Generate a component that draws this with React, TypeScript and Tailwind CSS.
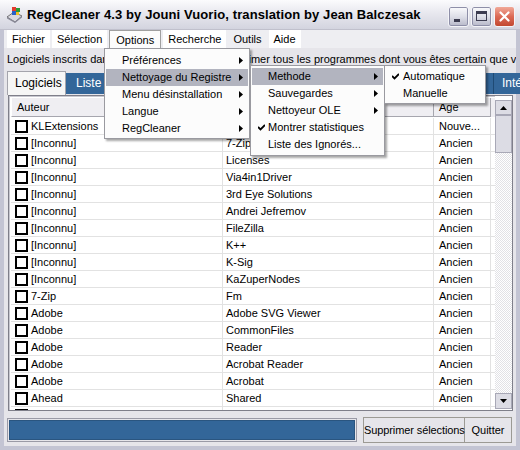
import React from "react";

const rows: [string, string, string][] = [
  ["KLExtensions", "", "Nouve..."],
  ["[Inconnu]", "7-Zip", "Ancien"],
  ["[Inconnu]", "Licenses", "Ancien"],
  ["[Inconnu]", "Via4in1Driver", "Ancien"],
  ["[Inconnu]", "3rd Eye Solutions", "Ancien"],
  ["[Inconnu]", "Andrei Jefremov", "Ancien"],
  ["[Inconnu]", "FileZilla", "Ancien"],
  ["[Inconnu]", "K++", "Ancien"],
  ["[Inconnu]", "K-Sig", "Ancien"],
  ["[Inconnu]", "KaZuperNodes", "Ancien"],
  ["7-Zip", "Fm", "Ancien"],
  ["Adobe", "Adobe SVG Viewer", "Ancien"],
  ["Adobe", "CommonFiles", "Ancien"],
  ["Adobe", "Reader", "Ancien"],
  ["Adobe", "Acrobat Reader", "Ancien"],
  ["Adobe", "Acrobat", "Ancien"],
  ["Ahead", "Shared", "Ancien"],
  ["Ahead", "Cover Designer", "Ancien"],
];

const Arrow = () => (
  <svg width="4" height="7" viewBox="0 0 4 7" className="absolute right-[5px] top-[5px]">
    <path d="M0 0 L4 3.5 L0 7 Z" fill="#000" />
  </svg>
);

const Check = ({ x }: { x: number }) => (
  <svg width="7" height="7" viewBox="0 0 7 7" className="absolute top-[5px]" style={{ left: x }}>
    <path d="M0 3 L2.5 5.5 L7 1" stroke="#000" strokeWidth="1.8" fill="none" />
  </svg>
);

function MenuItem({
  label,
  hl,
  arrow,
  check,
  pl,
}: {
  label: string;
  hl?: boolean;
  arrow?: boolean;
  check?: boolean;
  pl: string;
}) {
  return (
    <div className={`relative h-[17px] leading-[17px] mx-[1px] whitespace-nowrap ${pl} ${hl ? "bg-[#b2b4bf]" : ""}`}>
      {check && <Check x={6} />}
      {label}
      {arrow && <Arrow />}
    </div>
  );
}

function WinBtn({ kind }: { kind: "min" | "max" | "close" }) {
  const close = kind === "close";
  return (
    <div
      className={`w-[21px] h-[21px] rounded-[3px] border flex items-center justify-center ${
        close
          ? "border-[#f4f4f8] bg-gradient-to-b from-[#f0a898] via-[#dc6a56] to-[#c24830]"
          : "border-[#f4f4f8] bg-gradient-to-b from-[#fbfbfd] via-[#dedfe8] to-[#b7b8c9] shadow-[inset_0_0_0_1px_#8e8fa8]"
      }`}
    >
      {kind === "min" && <div className="w-[6px] h-[3px] bg-[#3c3c50] mt-[9px] -ml-[4px]" />}
      {kind === "max" && (
        <div className="w-[11px] h-[10px] border border-[#3c3c50] border-t-[3px]" />
      )}
      {close && (
        <svg width="11" height="11" viewBox="0 0 11 11">
          <path d="M1.5 1.5 L9.5 9.5 M9.5 1.5 L1.5 9.5" stroke="#fff" strokeWidth="2.2" strokeLinecap="round" />
        </svg>
      )}
    </div>
  );
}

export default function App() {
  const font = { fontFamily: '"Liberation Sans", Arial, sans-serif' };
  return (
    <div
      className="relative w-[520px] h-[450px] overflow-hidden bg-[#c3c4d3] text-[11px] text-black"
      style={font}
    >
      {/* Title bar */}
      <div className="h-[30px] flex items-center bg-gradient-to-b from-[#fbfbfd] via-[#e6e6ed] to-[#d3d4df] border-b border-[#c0c0cc] pl-[6px] pr-[5px]">
        <svg width="17" height="17" viewBox="0 0 17 17" className="mr-[4px]">
          <path d="M1 11 L9 16 L16 10 L8 6 Z" fill="#d8d8e0" stroke="#555" strokeWidth="0.8" />
          <path d="M1 11 L1 12.5 L9 17 L16 11.5 L16 10 L9 15.5 Z" fill="#8a8a98" />
          <rect x="6" y="1" width="4" height="4" fill="#e23b2e" />
          <rect x="10" y="2" width="4" height="4" fill="#2a9a3a" />
          <rect x="6" y="5" width="4" height="4" fill="#2860c8" />
          <rect x="10" y="6" width="3" height="3" fill="#f0c020" />
        </svg>
        <div className="font-bold text-[13px] tracking-[0.1px] text-black whitespace-nowrap">
          RegCleaner 4.3 by Jouni Vuorio, translation by Jean Balczesak
        </div>
        <div className="ml-auto flex gap-[2px] mt-[3px]">
          <WinBtn kind="min" />
          <WinBtn kind="max" />
          <WinBtn kind="close" />
        </div>
      </div>

      {/* Client area with frame */}
      <div className="absolute left-[4px] right-[4px] top-[30px] bottom-[4px] bg-[#e6e5ea] flex flex-col">
        {/* menu bar */}
        <div className="h-[18px] flex items-center bg-[#eeeef2] pl-[3px] gap-[2px]">
          {["Fichier", "Sélection", "Options", "Recherche", "Outils", "Aide"].map((m) => (
            <div
              key={m}
              className={`h-[18px] leading-[18px] px-[5px] ${
                m === "Options"
                  ? "bg-[#fcfcfc] border border-b-0 border-[#a0a0a0] leading-[17px] px-[6px]"
                  : m === "Outils"
                  ? "bg-[#eeeef2]"
                  : "bg-white"
              } ${m === "Recherche" ? "bg-[#f2f2f6]" : ""}`}
            >
              {m}
            </div>
          ))}
        </div>
        {/* info line */}
        <div className="h-[22px] leading-[22px] pl-[3px] whitespace-nowrap overflow-hidden">
          Logiciels inscrits dans la Base de Registre. Supprimer tous les programmes dont vous êtes certain que vous n'avez plus besoin.
        </div>
        {/* tabs */}
        <div className="h-[25px] flex items-end pl-[3px] -mr-[4px]">
          <div className="h-[24px] w-[59px] bg-[#f6f6f6] border border-b-0 border-[#a4a4ac] leading-[22px] pl-[7px] text-[12px] relative z-10">
            Logiciels
          </div>
          <div className="flex-1 h-[21px] mb-[1px] flex bg-[#336699] text-white leading-[20px] text-[12px] overflow-hidden">
            <div className="w-[150px] pl-[10px] border-r border-[#1f4a74] shrink-0">Liste des Ignorés</div>
            <div className="w-[278px] pl-[10px] border-r border-[#1f4a74] shrink-0">Statistiques</div>
            <div className="pl-[8px] shrink-0">Intégrité</div>
          </div>
        </div>
        {/* list */}
        <div className="h-[316px] ml-[4px] mr-[3px] border border-[#7f7f8a] bg-white flex overflow-hidden">
          <div className="flex-1 border-t border-l border-[#c8c8d0] flex flex-col overflow-hidden pl-[1px] pt-[1px]">
            <div className="h-[19px] flex shrink-0 bg-[#efeef2]">
              <div className="w-[212px] pl-[5px] leading-[19px] border-r border-b border-[#a6a6ae] border-l border-l-white">Auteur</div>
              <div className="w-[211px] pl-[4px] leading-[19px] border-r border-b border-[#a6a6ae]">Programme</div>
              <div className="w-[57px] pl-[5px] leading-[19px] border-r border-b border-[#a6a6ae]">Age</div>
            </div>
            <div className="pt-[1px]">
              {rows.map((r, i) => (
                <div key={i} className="h-[17px] flex border-b border-[#e2e2e2]">
                  <div className="w-[212px] flex items-center pl-[4px] border-r border-[#e2e2e2] shrink-0">
                    <div className="w-[13px] h-[13px] border-2 border-black bg-white mr-[3px] shrink-0" />
                    <span className="whitespace-nowrap">{r[0]}</span>
                  </div>
                  <div className="w-[211px] pl-[3px] leading-[16px] border-r border-[#e2e2e2] whitespace-nowrap shrink-0">{r[1]}</div>
                  <div className="w-[57px] pl-[5px] leading-[16px] border-r border-[#e2e2e2] whitespace-nowrap shrink-0">{r[2]}</div>
                </div>
              ))}
            </div>
          </div>
          {/* scrollbar */}
          <div className="w-[17px] flex flex-col pt-[4px] pb-[1px] bg-white">
            <div className="flex-1 flex flex-col bg-[repeating-conic-gradient(#e2e2e6_0_25%,#ffffff_0_50%)] bg-[length:2px_2px]">
              <div className="h-[15px] bg-[#dcdce4] border border-[#a8a8b6] flex items-center justify-center">
                <svg width="7" height="4" viewBox="0 0 7 4"><path d="M0 4 L3.5 0 L7 4 Z" fill="#000" /></svg>
              </div>
              <div className="h-[38px] bg-[#dcdce4] border border-[#a8a8b6]" />
              <div className="flex-1" />
              <div className="h-[16px] bg-[#dcdce4] border border-[#a8a8b6] flex items-center justify-center">
                <svg width="7" height="4" viewBox="0 0 7 4"><path d="M0 0 L3.5 4 L7 0 Z" fill="#000" /></svg>
              </div>
            </div>
          </div>
        </div>
        {/* bottom */}
        <div className="flex-1 flex items-center pl-[3px] pt-[2px]">
          <div className="w-[350px] h-[24px] border border-[#9a9aa6] p-[1px] bg-[#e6e5ea]">
            <div className="w-full h-full bg-[#336699] border border-[#2a5580]" />
          </div>
          <div className="ml-[6px] flex h-[26px]">
            <div className="w-[102px] border border-[#9c9a94] leading-[24px] text-center text-[11px] tracking-[-0.1px] bg-[#e6e5ea] whitespace-nowrap">
              Supprimer sélections
            </div>
            <div className="w-[47px] border border-l-0 border-[#9c9a94] leading-[24px] text-center text-[11px] bg-[#e6e5ea]">
              Quitter
            </div>
          </div>
        </div>
      </div>

      {/* Options menu */}
      <div className="absolute left-[104px] top-[48px] w-[146px] h-[91px] bg-[#fcfcfc] border border-[#9a9aa0] py-[3px] shadow-[2px_2px_2px_rgba(0,0,0,0.35)]">
        <MenuItem label="Préférences" arrow pl="pl-[16px]" />
        <MenuItem label="Nettoyage du Registre" arrow hl pl="pl-[16px]" />
        <MenuItem label="Menu désinstallation" arrow pl="pl-[16px]" />
        <MenuItem label="Langue" arrow pl="pl-[16px]" />
        <MenuItem label="RegCleaner" arrow pl="pl-[16px]" />
      </div>
      {/* Submenu Nettoyage */}
      <div className="absolute left-[250px] top-[65px] w-[135px] h-[91px] bg-[#fcfcfc] border border-[#9a9aa0] py-[2px] shadow-[2px_2px_2px_rgba(0,0,0,0.35)]">
        <MenuItem label="Methode" arrow hl pl="pl-[16px]" />
        <MenuItem label="Sauvegardes" arrow pl="pl-[16px]" />
        <MenuItem label="Nettoyeur OLE" arrow pl="pl-[16px]" />
        <MenuItem label="Montrer statistiques" check pl="pl-[16px]" />
        <MenuItem label="Liste des Ignorés..." pl="pl-[16px]" />
      </div>
      {/* Submenu Methode */}
      <div className="absolute left-[384px] top-[65px] w-[102px] h-[39px] bg-[#fcfcfc] border border-[#9a9aa0] py-[2px] shadow-[2px_2px_2px_rgba(0,0,0,0.35)]">
        <MenuItem label="Automatique" check pl="pl-[17px]" />
        <MenuItem label="Manuelle" pl="pl-[17px]" />
      </div>
    </div>
  );
}
